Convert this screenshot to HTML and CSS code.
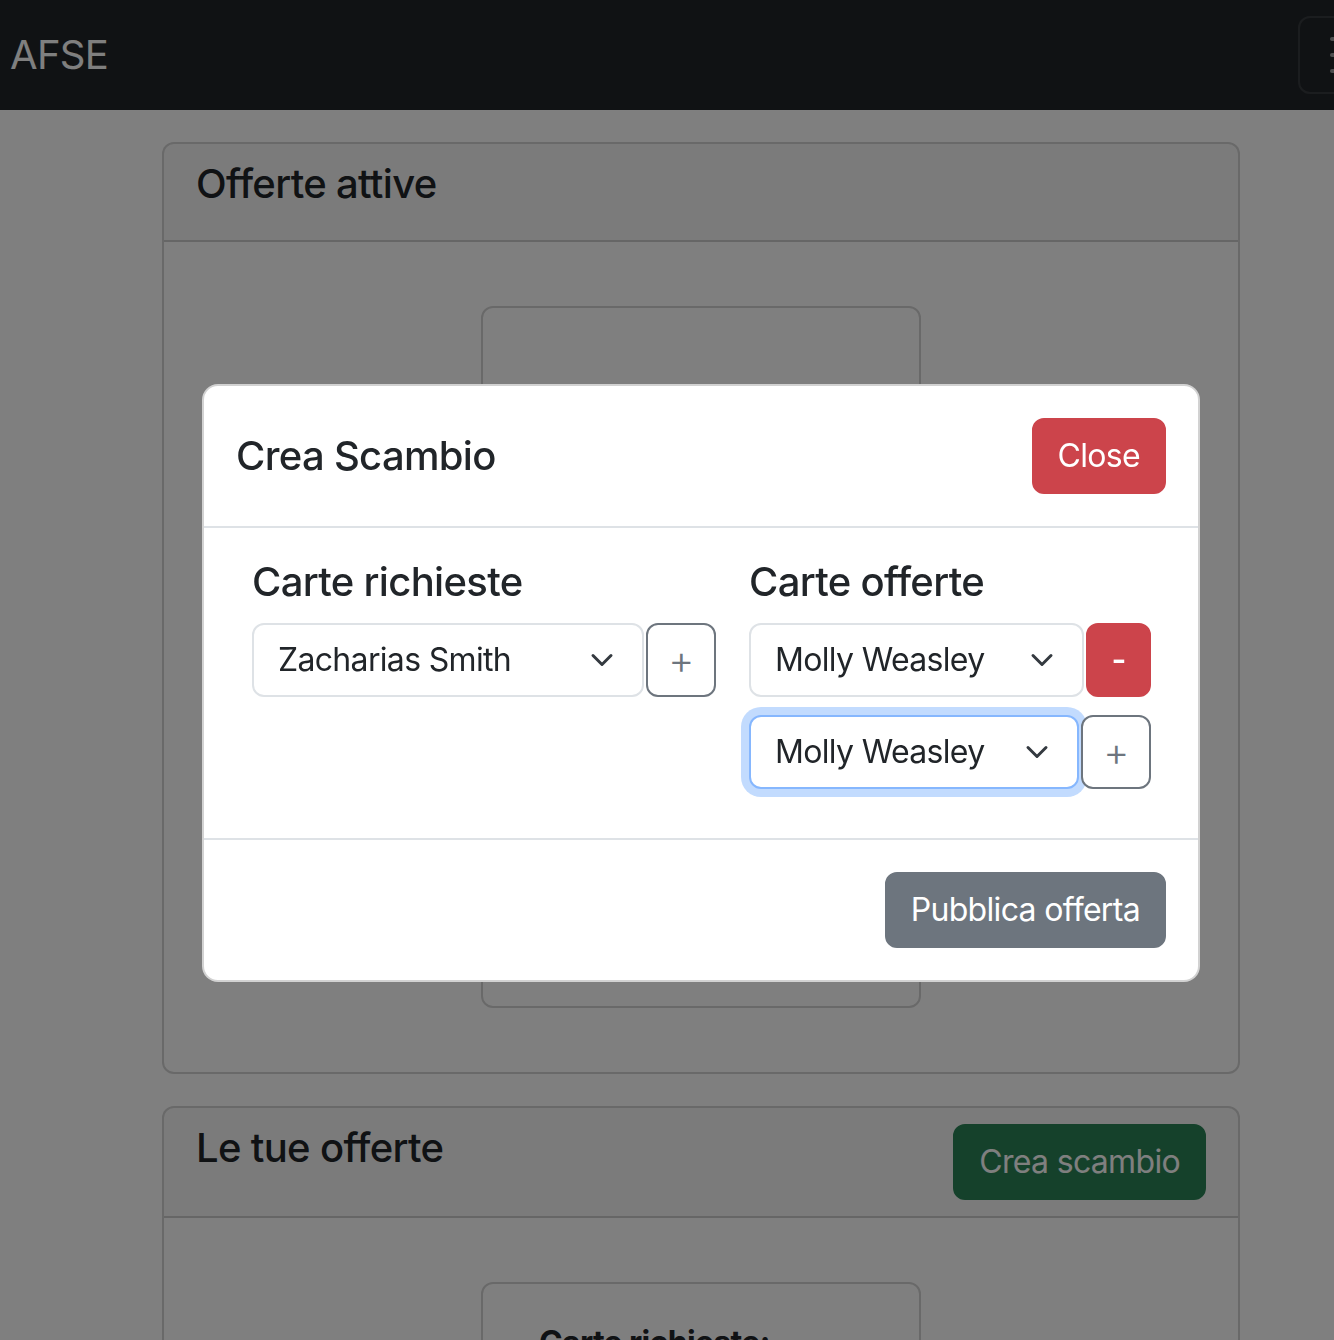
FILE: index.html
```html
<!DOCTYPE html>
<html lang="it">
<head>
<meta charset="utf-8">
<title>AFSE</title>
<link rel="stylesheet" href="styles.css">
</head>
<body>
<div class="page">
  <nav class="navbar">
    <span class="brand">AFSE</span>
    <button class="toggler" type="button" aria-label="Menu">
      <svg class="toggler-icon" viewBox="0 0 30 30" width="60" height="60">
        <path d="M4 7h22M4 15h22M4 23h22" stroke="rgba(255,255,255,0.55)" stroke-width="2" stroke-linecap="round"/>
      </svg>
    </button>
  </nav>

  <main class="main">
    <section class="card">
      <div class="card-header">
        <h5 class="card-title">Offerte attive</h5>
      </div>
      <div class="card-body">
        <div class="offer offer-tall">
          <h6 class="offer-title offer-title-low">Carte richieste:</h6>
        </div>
      </div>
    </section>

    <section class="card card-second">
      <div class="card-header card-header-flex">
        <h5 class="card-title">Le tue offerte</h5>
        <button class="btn btn-success" type="button">Crea scambio</button>
      </div>
      <div class="card-body">
        <div class="offer">
          <h6 class="offer-title">Carte richieste:</h6>
        </div>
      </div>
    </section>
  </main>
</div>

<div class="backdrop"></div>

<div class="modal">
  <div class="modal-header">
    <h5 class="modal-title">Crea Scambio</h5>
    <button class="btn btn-danger" type="button">Close</button>
  </div>
  <div class="modal-body">
    <div class="col col-left">
      <h4 class="col-title">Carte richieste</h4>
      <div class="pick-row">
        <div class="select sel-zach">
          <span class="select-text">Zacharias Smith</span>
          <svg class="chev" viewBox="0 0 16 16" width="32" height="24"><path d="m2 5 6 6 6-6" fill="none" stroke="#343a40" stroke-width="2" stroke-linecap="round" stroke-linejoin="round"/></svg>
        </div>
        <button class="btn btn-outline btn-plus" type="button">+</button>
      </div>
    </div>
    <div class="col col-right">
      <h4 class="col-title">Carte offerte</h4>
      <div class="pick-row">
        <div class="select sel-molly1">
          <span class="select-text">Molly Weasley</span>
          <svg class="chev" viewBox="0 0 16 16" width="32" height="24"><path d="m2 5 6 6 6-6" fill="none" stroke="#343a40" stroke-width="2" stroke-linecap="round" stroke-linejoin="round"/></svg>
        </div>
        <button class="btn btn-danger btn-minus" type="button">-</button>
      </div>
      <div class="pick-row">
        <div class="select select-focus sel-molly2">
          <span class="select-text">Molly Weasley</span>
          <svg class="chev" viewBox="0 0 16 16" width="32" height="24"><path d="m2 5 6 6 6-6" fill="none" stroke="#343a40" stroke-width="2" stroke-linecap="round" stroke-linejoin="round"/></svg>
        </div>
        <button class="btn btn-outline btn-plus" type="button">+</button>
      </div>
    </div>
  </div>
  <div class="modal-footer">
    <button class="btn btn-secondary" type="button">Pubblica offerta</button>
  </div>
</div>
</body>
</html>
```

FILE: styles.css
```css
html, body {
  margin: 0;
  padding: 0;
  overflow: hidden;
  background: #ffffff;
}

body {
  font-family: Inter, "Noto Sans", "Liberation Sans", sans-serif;
  color: #212529;
  font-size: 32px;
  line-height: 1.5;
  letter-spacing: -0.021em;
}

.page {
  width: 1334px;
  height: 1340px;
  overflow: hidden;
}

/* Navbar */
.navbar {
  height: 110px;
  background: #212529;
  display: flex;
  align-items: center;
  justify-content: space-between;
  padding-left: 10px;
  overflow: hidden;
}

.brand {
  color: #ffffff;
  font-size: 40px;
  font-weight: 400;
  line-height: 60px;
}

.toggler {
  flex-shrink: 0;
  width: 112px;
  height: 78px;
  margin-right: -76px;
  padding: 0 0 0 24px;
  border: 2px solid rgba(255, 255, 255, 0.1);
  border-radius: 12px;
  background: transparent;
  display: flex;
  align-items: center;
}

.toggler-icon {
  display: block;
}

/* Cards */
.main {
  padding-top: 32px;
}

.card {
  margin-left: 162px;
  width: 1078px;
  box-sizing: border-box;
  border: 2px solid rgba(0, 0, 0, 0.175);
  border-radius: 12px;
  background: #ffffff;
}

.card-second {
  margin-top: 32px;
}

.card-header {
  padding: 16px 32px;
  background: rgba(0, 0, 0, 0.03);
  border-bottom: 2px solid rgba(0, 0, 0, 0.175);
  border-radius: 10px 10px 0 0;
}

.card-header-flex {
  display: flex;
  justify-content: space-between;
  align-items: flex-start;
}

.card-title {
  margin: 0 0 16px;
  font-size: 40px;
  font-weight: 500;
  line-height: 48px;
}

.card-body {
  padding: 32px;
}

.offer {
  width: 440px;
  box-sizing: border-box;
  margin: 32px auto;
  border: 2px solid rgba(0, 0, 0, 0.175);
  border-radius: 12px;
  padding: 35px 24px 32px 56px;
  height: 300px;
}

.offer-tall {
  height: 702px;
}

.offer-title {
  margin: 0;
  font-size: 32px;
  font-weight: 700;
  line-height: 48px;
}

.offer-title-low {
  margin-top: 32px;
}

/* Buttons */
.btn {
  font-family: inherit;
  letter-spacing: inherit;
  font-size: 32px;
  line-height: 48px;
  padding: 12px 24px;
  border: 2px solid transparent;
  border-radius: 12px;
  cursor: pointer;
}

.btn-success {
  background: #2a8356;
  border-color: #2a8356;
  color: #ffffff;
}

.btn-danger {
  background: #cc444b;
  border-color: #cc444b;
  color: #ffffff;
}

.btn-secondary {
  background: #6d757e;
  border-color: #6d757e;
  color: #ffffff;
  margin: 8px;
}

.btn-outline {
  background: #ffffff;
  border-color: #6d757e;
  color: #6d757e;
  position: relative;
  z-index: 1;
}

.btn-plus {
  box-sizing: border-box;
  width: 70px;
  height: 74px;
  padding: 0;
  font-size: 40px;
  font-weight: 300;
}

.btn-minus {
  box-sizing: border-box;
  width: 65px;
  height: 74px;
  padding: 0;
  font-weight: 600;
}

/* Backdrop + modal */
.backdrop {
  position: fixed;
  inset: 0;
  background: rgba(0, 0, 0, 0.5);
}

.modal {
  position: absolute;
  top: 384px;
  left: 202px;
  width: 998px;
  box-sizing: border-box;
  background: #ffffff;
  border: 2px solid rgba(0, 0, 0, 0.175);
  border-radius: 16px;
}

.modal-header {
  display: flex;
  justify-content: space-between;
  align-items: center;
  padding: 32px;
  border-bottom: 2px solid #dee2e6;
}

.modal-title {
  margin: 0;
  font-size: 40px;
  font-weight: 500;
  line-height: 48px;
}

.modal-body {
  display: flex;
  padding: 30px 32px 31px 48px;
}

.col-left {
  width: 497px;
  flex-shrink: 0;
}

.col-right {
  flex: 1;
}

.col-title {
  margin: 0 0 17px;
  font-size: 40px;
  font-weight: 500;
  line-height: 48px;
}

.pick-row {
  display: flex;
  gap: 2px;
  margin-bottom: 18px;
}

.select {
  box-sizing: border-box;
  height: 74px;
  display: flex;
  align-items: center;
  padding: 0 24px;
  border: 2px solid #dee2e6;
  border-radius: 12px;
  background: #ffffff;
  color: #212529;
  font-size: 32px;
}

.select-text {
  flex: 1;
  white-space: nowrap;
}

.chev {
  display: block;
  flex-shrink: 0;
}

.sel-zach {
  width: 392px;
}

.sel-molly1 {
  width: 335px;
}

.sel-molly2 {
  width: 330px;
}

.select-focus {
  border-color: #86b7fe;
  box-shadow: 0 0 0 8px rgba(13, 110, 253, 0.25);
}

.modal-footer {
  display: flex;
  justify-content: flex-end;
  padding: 24px;
  border-top: 2px solid #dee2e6;
}
```
